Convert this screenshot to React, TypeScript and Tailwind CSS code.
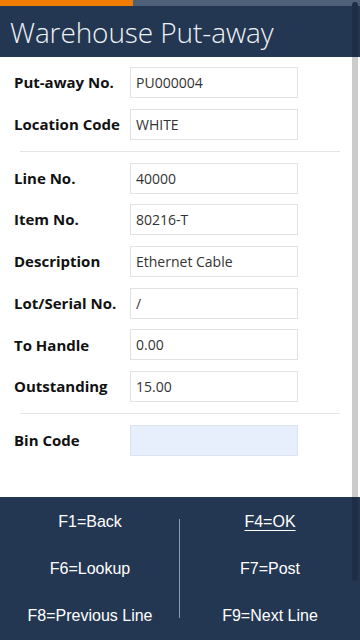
import React from "react";

type Field = { label: string; value: string };

const headFields: Field[] = [
  { label: "Put-away No.", value: "PU000004" },
  { label: "Location Code", value: "WHITE" },
];

const lineFields: Field[] = [
  { label: "Line No.", value: "40000" },
  { label: "Item No.", value: "80216-T" },
  { label: "Description", value: "Ethernet Cable" },
  { label: "Lot/Serial No.", value: "/" },
  { label: "To Handle", value: "0.00" },
  { label: "Outstanding", value: "15.00" },
];

function Row({ label, value, focus }: { label: string; value: string; focus?: boolean }) {
  return (
    <div className="flex h-[31px] items-center">
      <div className="w-[130px] shrink-0 pl-[14px] text-[15px] font-bold text-[#111]">{label}</div>
      <div
        className={`flex h-[31px] w-[168px] items-center border px-[5px] text-[14px] text-[#333] ${
          focus ? "border-[#dde3ee] bg-[#e8effc]" : "border-[#e2e2e2] bg-white"
        }`}
      >
        {value}
      </div>
    </div>
  );
}

export default function App() {
  return (
    <div
      className="relative h-[640px] w-[360px] overflow-hidden bg-white"
      style={{ fontFamily: '"Open Sans", "Noto Sans", sans-serif' }}
    >
      {/* top strip */}
      <div className="flex h-[6px]">
        <div className="w-[133px] bg-[#f07c00]" />
        <div className="flex-1 bg-[#4f6178]" />
      </div>
      <div className="flex h-[51px] items-center bg-[#243752] pl-[10px]">
        <span className="text-[28px] font-light tracking-[-0.1px] text-[#eef1f5]">
          Warehouse Put-away
        </span>
      </div>

      <div className="flex flex-col pt-[10px]">
        <div className="flex flex-col gap-[10.5px]">
          {headFields.map((f) => (
            <Row key={f.label} {...f} />
          ))}
        </div>
        <div className="mx-[20px] my-[11px] h-px bg-[#e4e4e4]" />
        <div className="flex flex-col gap-[10.7px]">
          {lineFields.map((f) => (
            <Row key={f.label} {...f} />
          ))}
        </div>
        <div className="mx-[20px] my-[11px] h-px bg-[#e4e4e4]" />
        <Row label="Bin Code" value="" focus />
      </div>

      {/* footer */}
      <div
        className="absolute inset-x-0 bottom-0 grid h-[143px] grid-cols-2 grid-rows-3 bg-[#243752] py-[1px] text-[16px] text-white"
        style={{ fontFamily: '"Liberation Sans", Arial, sans-serif' }}
      >
        <div className="flex items-center justify-center">F1=Back</div>
        <div className="flex items-center justify-center">
          <span className="underline underline-offset-[3px]">F4=OK</span>
        </div>
        <div className="flex items-center justify-center">F6=Lookup</div>
        <div className="flex items-center justify-center">F7=Post</div>
        <div className="flex items-center justify-center">F8=Previous Line</div>
        <div className="flex items-center justify-center">F9=Next Line</div>
        <div className="absolute left-[179px] top-[22px] h-[99px] w-px bg-[#8a9ab0]" />
      </div>

      {/* scrollbar */}
      <div className="absolute right-[2px] top-[57px] h-[440px] w-[6px] bg-[#cccccc]" />
      <div className="absolute right-[2px] top-[2px] h-[55px] w-[6px] rounded-t-full bg-[#1f2e45]" />
      <div className="absolute right-[2px] top-[497px] h-[84px] w-[6px] rounded-b-full bg-[#1f2e45]" />
    </div>
  );
}
